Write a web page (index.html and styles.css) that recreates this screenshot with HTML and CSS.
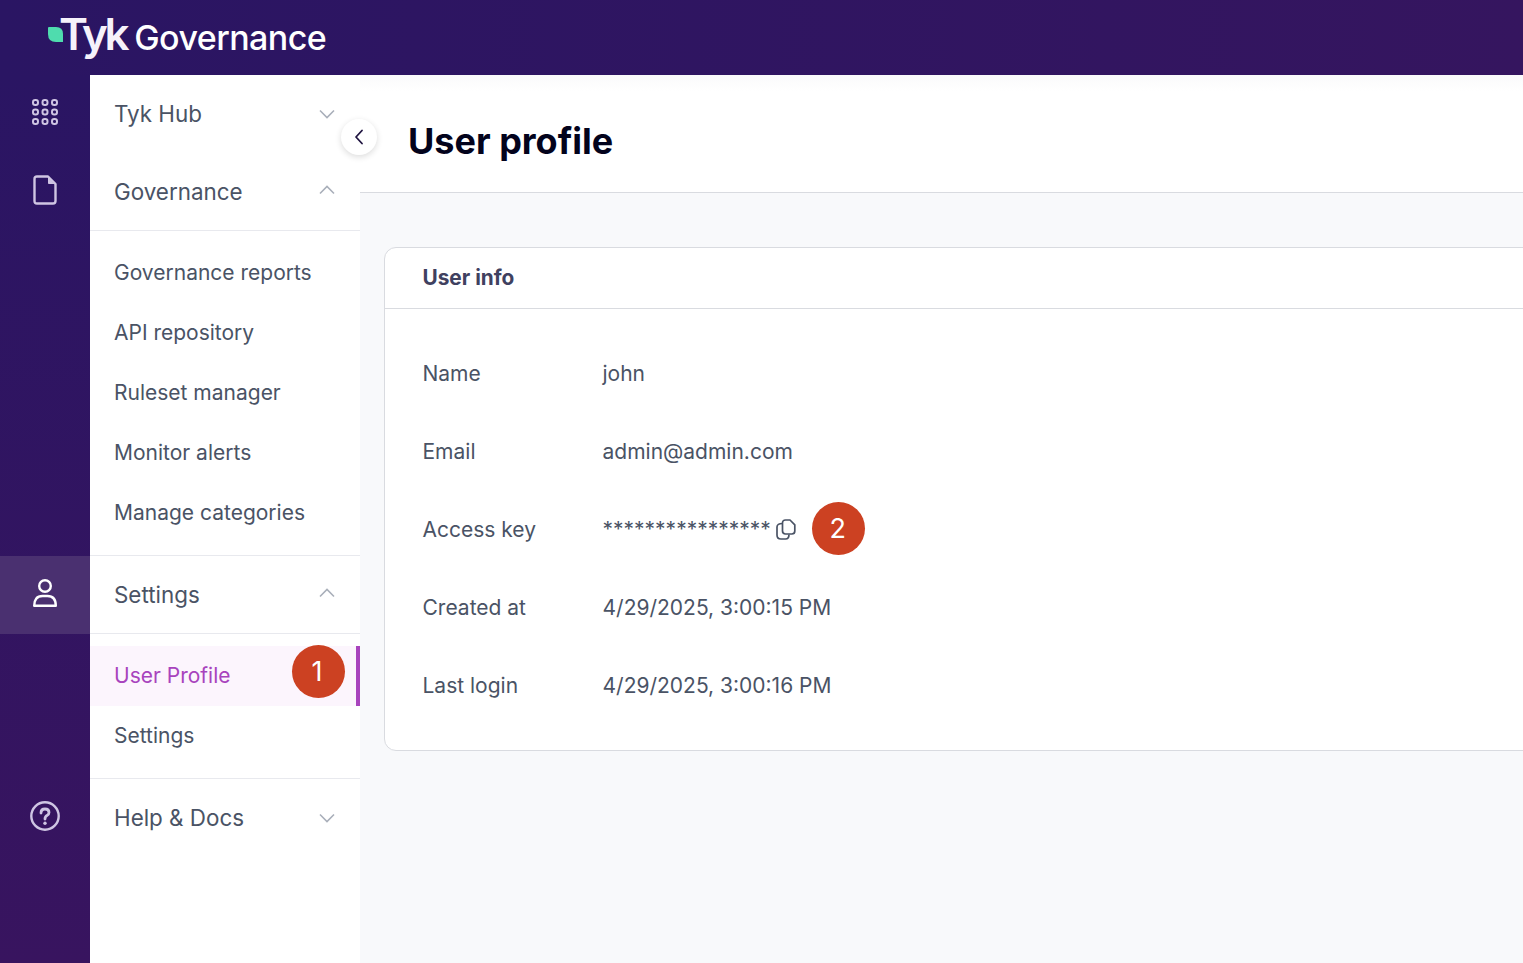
FILE: index.html
```html
<!DOCTYPE html>
<html lang="en">

<head>
    <meta charset="UTF-8">
    <meta name="viewport" content="width=device-width, initial-scale=1.0">
    <title>User profile</title>
    <link rel="stylesheet" href="styles.css">
</head>

<body>
    <header class="topbar">
        <svg class="logo-leaf" viewBox="0 0 15 15" width="15" height="15">
            <path d="M0 1 Q0 0 1 0 H8 Q15 0 15 7 V15 H8 Q0 15 0 7 Z" fill="#4fdcae"></path>
        </svg>
        <span class="logo-tyk">Tyk</span>
        <span class="logo-name">Governance</span>
    </header>
    <div class="layout">
        <nav class="rail">
            <a class="rail-item">
                <svg viewBox="0 0 26 26" width="26" height="26" fill="none" stroke="#cfc5e3" stroke-width="2">
                    <rect x="1" y="1" width="5" height="5" rx="2.200"></rect>
                    <rect x="10.500" y="1" width="5" height="5" rx="2.200"></rect>
                    <rect x="20" y="1" width="5" height="5" rx="2.200"></rect>
                    <rect x="1" y="10.500" width="5" height="5" rx="2.200"></rect>
                    <rect x="10.500" y="10.500" width="5" height="5" rx="2.200"></rect>
                    <rect x="20" y="10.500" width="5" height="5" rx="2.200"></rect>
                    <rect x="1" y="20" width="5" height="5" rx="2.200"></rect>
                    <rect x="10.500" y="20" width="5" height="5" rx="2.200"></rect>
                    <rect x="20" y="20" width="5" height="5" rx="2.200"></rect>
                </svg>
            </a>
            <a class="rail-item">
                <svg viewBox="0 0 24 30" width="24" height="30" fill="none" stroke="#cfc5e3" stroke-width="2.400" stroke-linejoin="round">
                    <path d="M4 1.500 H15 L22.500 9 V26 Q22.500 28.500 20 28.500 H4 Q1.500 28.500 1.500 26 V4 Q1.500 1.500 4 1.500 Z"></path>
                    <path d="M15.500 3 L21 8.500 H15.500 Z" fill="#cfc5e3" stroke-width="1"></path>
                </svg>
            </a>
            <a class="rail-item rail-item-active">
                <svg viewBox="0 0 24 28" width="24" height="28" fill="none" stroke="#fff" stroke-width="2.400">
                    <circle cx="12" cy="7" r="5.800"></circle>
                    <path d="M1.200 26.800 Q1.200 17 9.500 17 H14.500 Q22.800 17 22.800 26.800 Z" stroke-linejoin="round"></path>
                </svg>
            </a>
            <a class="rail-item rail-item-help">
                <svg viewBox="0 0 30 30" width="30" height="30" fill="none" stroke="#cfc5e3" stroke-width="2.400">
                    <circle cx="15" cy="15" r="13.700"></circle>
                    <path d="M11 12 Q11 8 15 8 Q19 8 19 11.500 Q19 13.500 17 14.500 Q15 15.500 15 18" stroke-width="2.800" stroke-linecap="round"></path>
                    <circle cx="15" cy="22.300" r="1.700" fill="#cfc5e3" stroke="none"></circle>
                </svg>
            </a>
        </nav>

        <aside class="sidebar">
            <div class="group-head group-head-top">
                <span>Tyk Hub</span>
                <svg class="chev" viewBox="0 0 16 10" width="16" height="10"><path d="M1 1.500 L8 8.500 L15 1.500"></path></svg>
            </div>
            <div class="group-head group-head-line">
                <span>Governance</span>
                <svg class="chev chev-up" viewBox="0 0 16 10" width="16" height="10"><path d="M1 8.500 L8 1.500 L15 8.500"></path></svg>
            </div>
            <ul class="sub-list">
                <li>Governance reports</li>
                <li>API repository</li>
                <li>Ruleset manager</li>
                <li>Monitor alerts</li>
                <li>Manage categories</li>
            </ul>
            <div class="group-head group-head-line">
                <span>Settings</span>
                <svg class="chev chev-up" viewBox="0 0 16 10" width="16" height="10"><path d="M1 8.500 L8 1.500 L15 8.500"></path></svg>
            </div>
            <ul class="sub-list">
                <li class="current">User Profile<span class="badge badge-over">1</span></li>
                <li>Settings</li>
            </ul>
            <div class="group-head group-head-top">
                <span>Help &amp; Docs</span>
                <svg class="chev" viewBox="0 0 16 10" width="16" height="10"><path d="M1 1.500 L8 8.500 L15 1.500"></path></svg>
            </div>
            <button class="collapse">
                <svg viewBox="0 0 10 16" width="10" height="16" fill="none" stroke="#1f1440" stroke-width="1.800" stroke-linecap="round" stroke-linejoin="round"><path d="M8 1.500 L2 8 L8 14.500"></path></svg>
            </button>
        </aside>

        <main class="content">
            <div class="page-head">
                <h1>User profile</h1>
            </div>
            <section class="card">
                <h2>User info</h2>
                <dl class="info">
                    <div class="info-row"><dt>Name</dt><dd>john</dd></div>
                    <div class="info-row"><dt>Email</dt><dd>admin@admin.com</dd></div>
                    <div class="info-row">
                        <dt>Access key</dt>
                        <dd class="key">
                            <span class="stars">****************</span>
                            <svg class="copy" viewBox="0 0 20 21" width="20" height="21" fill="none" stroke="#4a5365" stroke-width="1.700" stroke-linejoin="round">
                                <path d="M9.500 1 H14 L18.800 5.800 V12 Q18.800 15 15.800 15 H9.500 Q6.500 15 6.500 12 V4 Q6.500 1 9.500 1 Z"></path>
                                <path d="M6.500 4.500 Q1 4.500 1 8 V16 Q1 20 5 20 H9.500 Q13 20 13 15.500"></path>
                            </svg>
                            <span class="badge">2</span>
                        </dd>
                    </div>
                    <div class="info-row"><dt>Created at</dt><dd>4/29/2025, 3:00:15 PM</dd></div>
                    <div class="info-row"><dt>Last login</dt><dd>4/29/2025, 3:00:16 PM</dd></div>
                </dl>
            </section>
        </main>
    </div>
</body>

</html>
```

FILE: styles.css
```css
* {
    box-sizing: border-box;
}

body {
    margin: 0;
    height: 963px;
    overflow: hidden;
    font-family: Inter, "Liberation Sans", sans-serif;
    font-size: 21px;
    color: #4a5365;
    display: flex;
    flex-direction: column;
}

.topbar {
    height: 75px;
    flex: none;
    display: flex;
    align-items: baseline;
    padding: 7px 0 0 48px;
    background: linear-gradient(90deg, #2a1563, #35155f);
    color: #fff;
    position: relative;
    z-index: 2;
}

.logo-leaf {
    align-self: flex-start;
    margin-top: 20px;
    flex: none;
}

.logo-tyk {
    margin-left: -4px;
    font-size: 44px;
    font-weight: 600;
    letter-spacing: -3.400px;
    color: #f6f2fb;
}

.logo-name {
    margin-left: 8px;
    font-size: 34px;
    font-weight: 500;
    letter-spacing: -.55px;
}

.layout {
    flex: 1;
    display: flex;
    min-height: 0;
}

.rail {
    width: 90px;
    flex: none;
    background: linear-gradient(180deg, #2a1563, #38145f);
}

.rail-item {
    height: 78px;
    display: flex;
    align-items: center;
    justify-content: center;
}

.rail-item svg {
    margin-top: -4px;
}

.rail-item-active {
    margin-top: 325px;
    background: #4a3070;
}

.rail-item-help {
    margin-top: 145px;
}

.sidebar {
    width: 270px;
    flex: none;
    background: #fff;
    position: relative;
}

.group-head {
    height: 78px;
    display: flex;
    align-items: center;
    justify-content: space-between;
    padding: 0 25px 0 24px;
    font-size: 22.400px;
}

.group-head-top span {
    margin-top: -2px;
}

.group-head-line {
    border-bottom: 1px solid #e8e9ee;
}

.chev {
    fill: none;
    stroke: #a9afba;
    stroke-width: 1.600;
}

.chev-up {
    margin-top: -4px;
}

.sub-list {
    list-style: none;
    margin: 0;
    padding: 12px 0;
    border-bottom: 1px solid #e8e9ee;
}

.sub-list li {
    height: 60px;
    display: flex;
    align-items: center;
    padding: 0 0 1px 24px;
    position: relative;
}

.sub-list li.current {
    background: #fcf5fd;
    color: #a843bd;
    border-right: 4px solid #a843bd;
}

.badge {
    width: 53px;
    height: 53px;
    border-radius: 50%;
    background: #cc4122;
    color: #fff;
    font-size: 27px;
    display: inline-flex;
    align-items: center;
    justify-content: center;
    flex: none;
}

.badge-over {
    position: absolute;
    left: 202px;
    top: -1px;
    padding-right: 3px;
}

.collapse {
    position: absolute;
    left: 251px;
    top: 44px;
    width: 36px;
    height: 36px;
    padding: 0;
    border: 0;
    border-radius: 50%;
    background: #fff;
    box-shadow: 0 2px 6px rgba(0, 0, 0, .14);
    display: flex;
    align-items: center;
    justify-content: center;
    z-index: 1;
}

.content {
    flex: 1;
    min-width: 0;
    background: #f8f9fb;
    overflow: hidden;
}

.page-head {
    height: 118px;
    background: linear-gradient(180deg, #fafafb, #fff 16px);
    border-bottom: 1px solid #d9dbe0;
    padding: 14px 0 0 48px;
    display: flex;
    align-items: center;
}

h1 {
    margin: 0;
    font-size: 36px;
    font-weight: 700;
    color: #03031c;
}

.card {
    width: 1300px;
    margin: 54px 0 0 24px;
    background: #fff;
    border: 1px solid #d9dbe0;
    border-radius: 12px;
}

h2 {
    margin: 0;
    height: 61px;
    padding: 0 0 2px 37.500px;
    display: flex;
    align-items: center;
    font-size: 20.800px;
    font-weight: 700;
    color: #3f4160;
    border-bottom: 1px solid #d9dbe0;
}

.info {
    margin: 0;
    padding: 25px 0 26px;
}

.info-row {
    height: 78px;
    display: flex;
    align-items: center;
    padding-left: 37.500px;
}

.info-row dt {
    width: 180px;
}

.info-row dd {
    margin: 0;
}

.key {
    display: flex;
    align-items: center;
}

.stars {
    padding-top: 1px;
}

.copy {
    margin-left: 5px;
    flex: none;
}

.key .badge {
    margin: -2px 0 0 16px;
    padding-right: 1px;
}
```
